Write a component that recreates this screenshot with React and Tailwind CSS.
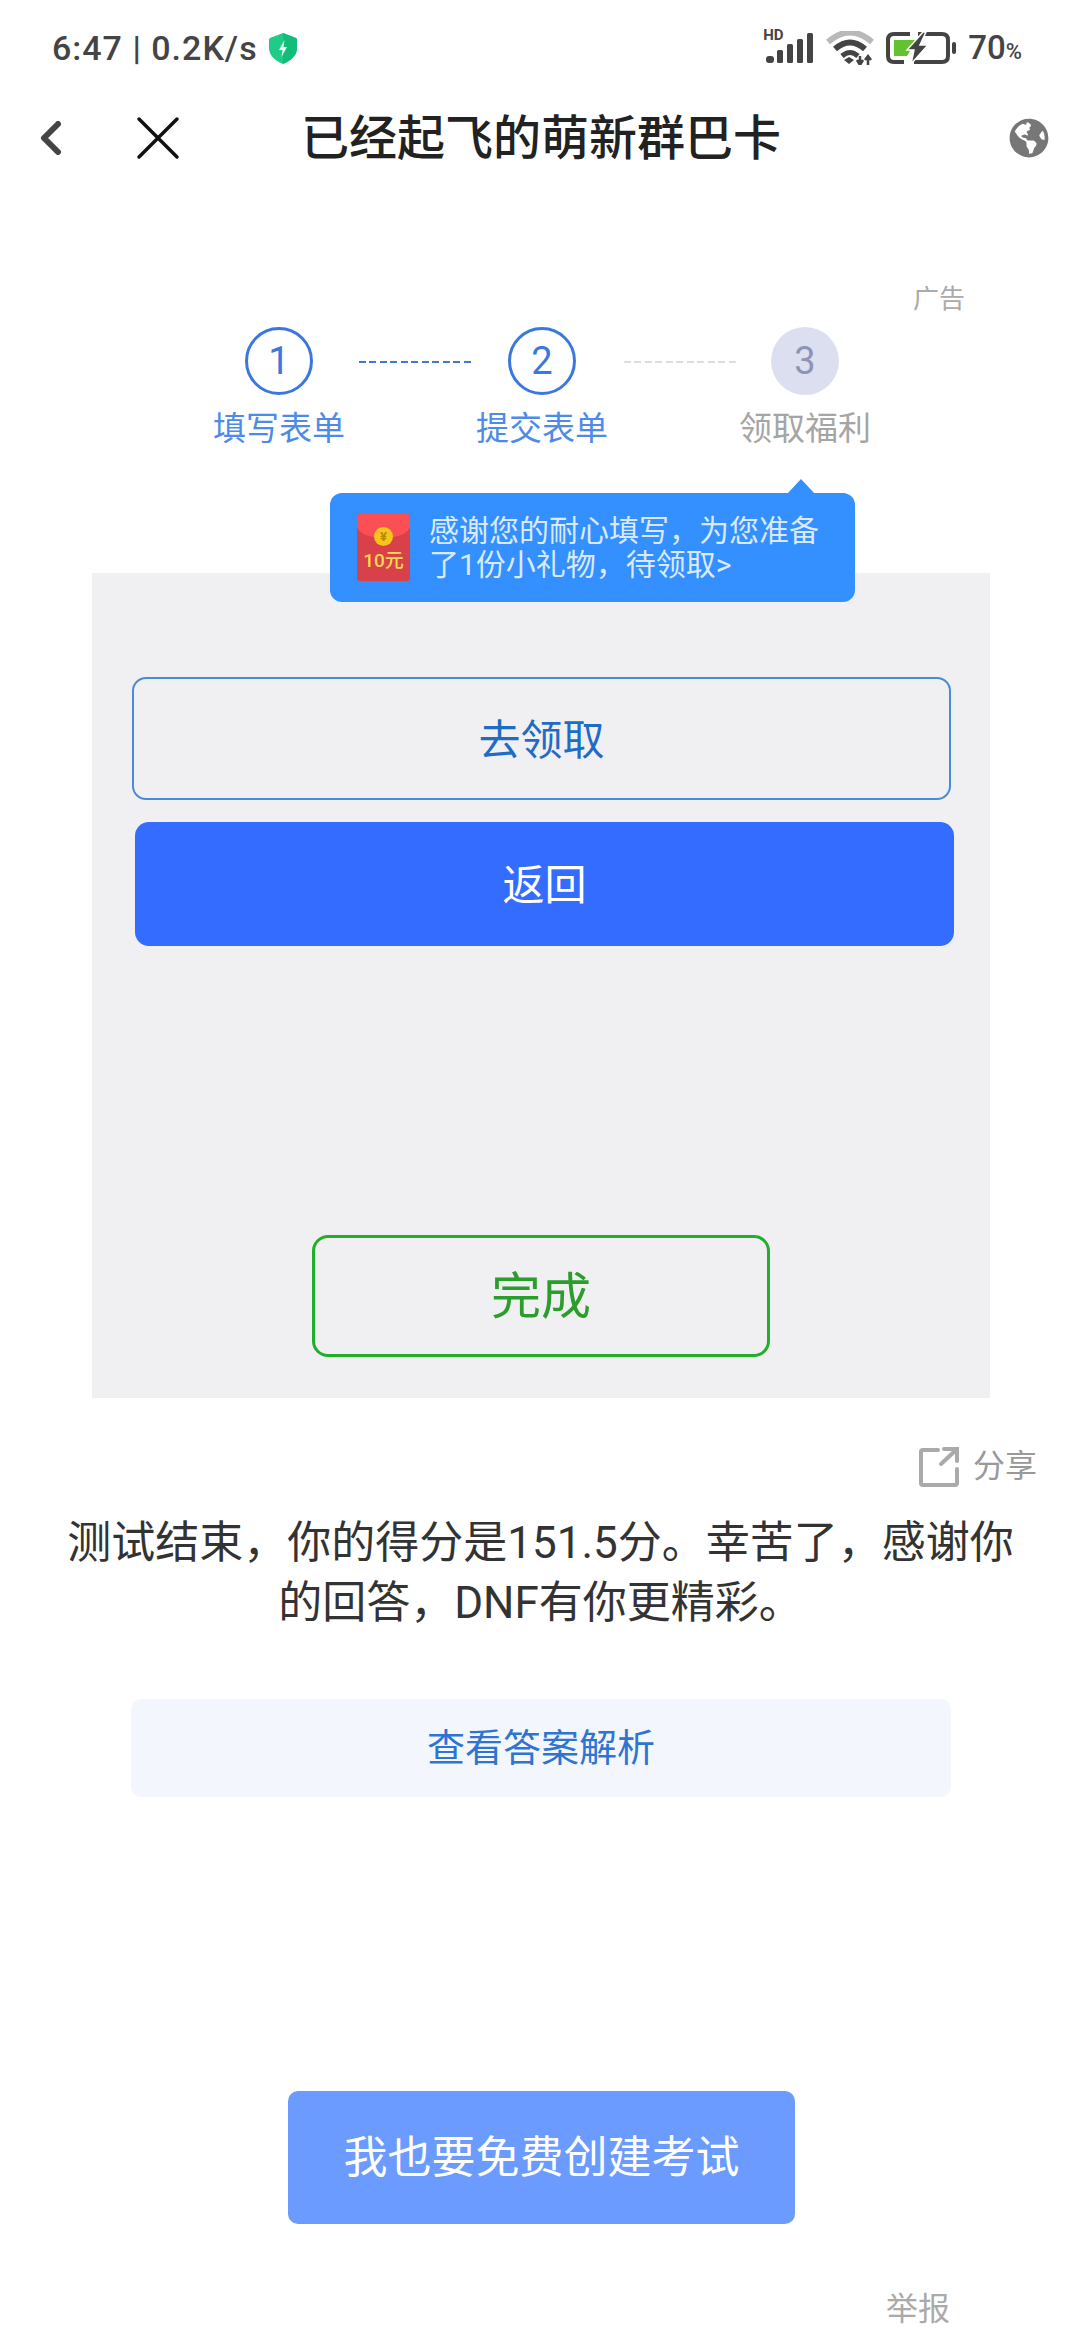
import React from "react";
import { FaGlobeAmericas } from "react-icons/fa";

function Shield() {
  return (
    <svg width="28" height="31" viewBox="0 0 28 31" className="ml-[11px]">
      <path d="M14 0 L27 5 Q28 5.500 28 7 V15 Q28 25 14 31 Q0 25 0 15 V7 Q0 5.500 1 5 Z" fill="#1fcb87" />
      <path d="M14 0 L27 5 Q28 5.500 28 7 V15 Q28 25 14 31 Z" fill="#12bd7a" />
      <path d="M15.500 7 L10 17 H13.500 L12.500 24 L18 14 H14.500 Z" fill="#e8fff5" />
    </svg>
  );
}

function StatusIcons() {
  return (
    <div className="relative w-[196px] h-[34px]">
      <span className="absolute left-[3px] top-[-5px] text-[15px] leading-[18px] font-bold text-[#444]">HD</span>
      <svg width="196" height="34" viewBox="0 0 196 34" className="block">
        <g fill="#444">
          <rect x="6" y="25" width="8" height="7" rx="3" />
          <rect x="17" y="19" width="6" height="13" rx="1.500" />
          <rect x="27" y="13" width="6" height="19" rx="1.500" />
          <rect x="37" y="8" width="6" height="24" rx="1.500" />
          <rect x="47" y="2" width="6" height="30" rx="1.500" />
        </g>
        <path d="M68 11 Q90 -8 112 11" fill="none" stroke="#b9b9b9" strokeWidth="6" />
        <path d="M75 18 Q90 5 105 18" fill="none" stroke="#444" strokeWidth="6" />
        <path d="M82 25 Q90 18 98 25" fill="none" stroke="#444" strokeWidth="5" />
        <path d="M84 29 L89 26 L94 29 L89 33 Z" fill="#444" />
        <path d="M100 25 V34 M97 29 L100 34 L103 29 M108 34 V25 M105 29 L108 25 L111 29" fill="none" stroke="#444" strokeWidth="2.500" />
        <path d="M158 3 H182 Q188 3 188 9 V25 Q188 31 182 31 H154 M144 31 H134 Q128 31 128 25 V9 Q128 3 134 3 H150" fill="none" stroke="#444" strokeWidth="4" />
        <path d="M134 9 H157 L147 25 H134 Z" fill="#63c22f" />
        <path d="M163 1 L147 19 H154 L151 33 L168 14 H160 L166 1 Z" fill="#444" stroke="#fff" strokeWidth="1.500" />
        <rect x="192" y="11" width="4" height="12" rx="2" fill="#444" />
      </svg>
    </div>
  );
}

function Step({ n, label, active }) {
  return (
    <div className="w-[130px] flex flex-col items-center shrink-0">
      <div
        className={
          active
            ? "w-[68px] h-[68px] rounded-full border-[3px] border-[#3a78e0] flex items-center justify-center text-[38px] text-[#3a78e0]"
            : "w-[68px] h-[68px] rounded-full bg-[#dcdff0] flex items-center justify-center text-[38px] text-[#8f94b5]"
        }
      >
        {n}
      </div>
      <div
        className={
          active
            ? "mt-[14px] text-[33px] leading-[40px] whitespace-nowrap text-[#4e8ae8]"
            : "mt-[14px] text-[33px] leading-[40px] whitespace-nowrap text-[#a5a5a5]"
        }
      >
        {label}
      </div>
    </div>
  );
}

function RedPacket() {
  return (
    <div className="relative w-[53px] h-[67px] shrink-0 rounded-[3px] bg-[#d8414a] overflow-hidden flex flex-col items-center">
      <div className="absolute top-0 left-0 w-full h-[24px] bg-[#fb4f55] rounded-b-[50%]" />
      <div className="relative mt-[13px] w-[19px] h-[19px] rounded-full bg-[#f5c518] flex items-center justify-center text-[13px] leading-none font-bold text-[#b8860b]">¥</div>
      <div className="relative mt-[4px] text-[19px] leading-[22px] text-[#ffd84d] font-medium whitespace-nowrap">10元</div>
    </div>
  );
}

export default function App() {
  return (
    <div className="w-[1080px] h-[2340px] bg-white overflow-hidden font-['Roboto','Noto_Sans_CJK_SC',sans-serif]">
      <div className="h-[96px] flex items-center justify-between pl-[52px] pr-[58px]">
        <div className="flex items-center text-[34px] tracking-[1px] text-[#444] font-medium">
          <span>6:47 | 0.2K/s</span>
          <Shield />
        </div>
        <div className="flex items-center">
          <StatusIcons />
          <span className="ml-[12px] text-[33px] text-[#444] font-medium">70<span className="text-[22px]">%</span></span>
        </div>
      </div>

      <div className="h-[84px] flex items-center">
        <svg width="24" height="34" viewBox="0 0 24 34" className="ml-[39px]">
          <path d="M19 3 L5 17 L19 31" fill="none" stroke="#444" strokeWidth="6" strokeLinecap="round" strokeLinejoin="round" />
        </svg>
        <svg width="44" height="44" viewBox="0 0 44 44" className="ml-[73px]">
          <path d="M3 3 L41 41 M41 3 L3 41" fill="none" stroke="#111" strokeWidth="3.500" strokeLinecap="round" />
        </svg>
        <div className="ml-[121px] pt-[2px] text-[48px] leading-[60px] font-medium text-[#222] whitespace-nowrap">已经起飞的萌新群巴卡</div>
        <FaGlobeAmericas className="ml-[228px] w-[40px] h-[40px] text-[#777]" />
      </div>

      <div className="mt-[101px] h-[36px] pr-[115px] text-right text-[26px] leading-[36px] text-[#aaa]">广告</div>

      <div className="mt-[10px] pl-[214px] flex items-start">
        <Step n="1" label="填写表单" active />
        <div className="mt-[34px] ml-[15px] mr-[4px] w-[114px] h-[2px] shrink-0 bg-[repeating-linear-gradient(90deg,#3f7bc9_0_7px,transparent_7px_10.5px)]" />
        <Step n="2" label="提交表单" active />
        <div className="mt-[34px] ml-[17px] mr-[2px] w-[114px] h-[2px] shrink-0 bg-[repeating-linear-gradient(90deg,#dddddd_0_7px,transparent_7px_10.5px)]" />
        <Step n="3" label="领取福利" />
      </div>

      <div className="relative mt-[124px] ml-[92px] w-[898px] h-[825px] bg-[#f0f0f3] pt-[104px]">
        <div className="absolute left-[238px] top-[-80px] w-[525px] h-[109px] rounded-[12px] bg-[#3490ff] flex items-center pl-[27px]">
          <div className="absolute top-[-14px] left-[457px] w-[28px] h-[15px] bg-[#3490ff] [clip-path:polygon(50%_0,100%_100%,0_100%)]" />
          <RedPacket />
          <div className="ml-[19px] text-[30px] leading-[34px] text-[#d9eaff] whitespace-nowrap">
            感谢您的耐心填写，为您准备
            <br />
            了1份小礼物，待领取&gt;
          </div>
        </div>

        <div className="ml-[40px] w-[819px] h-[123px] pt-[3px] rounded-[14px] border-2 border-[#4a8ad8] flex items-center justify-center text-[42px] text-[#1f6cc4]">去领取</div>
        <div className="mt-[22px] ml-[43px] w-[819px] h-[124px] pt-[2px] rounded-[14px] bg-[#336cff] flex items-center justify-center text-[42px] text-white">返回</div>
        <div className="mt-[289px] ml-[220px] w-[458px] h-[122px] pt-[2px] rounded-[16px] border-[3.500px] border-[#22ad2a] flex items-center justify-center text-[50px] text-[#2a9d2a]">完成</div>
      </div>

      <div className="mt-[49px] h-[39px] pr-[43px] flex items-center justify-end">
        <svg width="40" height="40" viewBox="0 0 40 40">
          <path d="M19 3 H4 Q2 3 2 5 V36 Q2 38 4 38 H36 Q38 38 38 36 V22" fill="none" stroke="#aaa" strokeWidth="4" strokeLinecap="round" />
          <path d="M22 17 L37 3 M25 2 H38 V14" fill="none" stroke="#aaa" strokeWidth="4" strokeLinecap="round" />
        </svg>
        <span className="ml-[14px] text-[32px] leading-[39px] text-[#999]">分享</span>
      </div>

      <div className="mt-[27px] ml-[1px] text-center text-[44px] leading-[60px] text-[#333]">
        测试结束，你的得分是151.5分。幸苦了，感谢你
        <br />
        的回答，DNF有你更精彩。
      </div>

      <div className="mt-[66px] ml-[131px] w-[820px] h-[98px] rounded-[10px] bg-[#f3f7fd] flex items-center justify-center text-[38px] text-[#2f74d0]">查看答案解析</div>

      <div className="mt-[294px] ml-[288px] w-[507px] h-[133px] rounded-[10px] bg-[#6b9bff] flex items-center justify-center text-[44px] text-white">我也要免费创建考试</div>

      <div className="mt-[65px] pr-[130px] text-right text-[32px] leading-[40px] text-[#aaa]">举报</div>
    </div>
  );
}
